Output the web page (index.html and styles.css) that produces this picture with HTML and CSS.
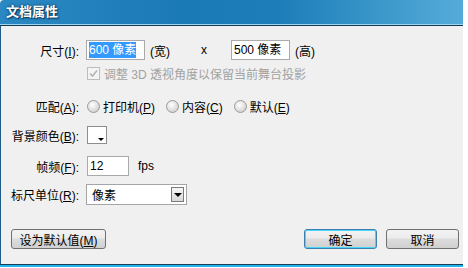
FILE: index.html
```html
<!DOCTYPE html>
<html lang="zh-CN">
<head>
    <meta charset="UTF-8">
    <title>文档属性</title>
    <link rel="stylesheet" href="styles.css">
</head>
<body>
    <div class="window">
        <div class="titlebar">文档属性</div>
        <div class="content">
            <div class="row row-size">
                <span class="label">尺寸(<u>I</u>):</span>
                <span class="input w-size"><span class="sel">600 像素</span></span>
                <span class="unit">(宽)</span>
                <span class="times">x</span>
                <span class="input w-size">500 像素</span>
                <span class="unit">(高)</span>
            </div>
            <div class="row row-check">
                <span class="label"></span>
                <span class="check">
                    <svg width="9" height="9" viewBox="0 0 9 9"><path d="M1 4.5 L3.5 7 L8 1.5" fill="none" stroke="#b4b4b4" stroke-width="1.6"/></svg>
                </span>
                <span class="disabled">调整 3D 透视角度以保留当前舞台投影</span>
            </div>
            <div class="row row-match">
                <span class="label">匹配(<u>A</u>):</span>
                <span class="radio"></span><span class="opt">打印机(<u>P</u>)</span>
                <span class="radio"></span><span class="opt">内容(<u>C</u>)</span>
                <span class="radio"></span><span class="opt">默认(<u>E</u>)</span>
            </div>
            <div class="row row-bg">
                <span class="label">背景颜色(<u>B</u>):</span>
                <span class="swatch"><span class="swatch-arrow"></span></span>
            </div>
            <div class="row row-fps">
                <span class="label">帧频(<u>F</u>):</span>
                <span class="input w-fps">12</span>
                <span class="fps">fps</span>
            </div>
            <div class="row row-ruler">
                <span class="label">标尺单位(<u>R</u>):</span>
                <span class="select">像素<span class="select-btn"></span></span>
            </div>
            <div class="buttons">
                <button class="btn btn-default">设为默认值(<u>M</u>)</button>
                <span class="spacer"></span>
                <button class="btn btn-ok">确定</button>
                <button class="btn">取消</button>
            </div>
        </div>
    </div>
</body>
</html>
```

FILE: styles.css
```css
body {
    margin: 0;
    width: 468px;
    height: 268px;
    background: #ffffff;
    font-family: "Liberation Sans", "Noto Sans CJK SC", sans-serif;
    font-size: 12px;
    color: #000;
}
.window {
    width: 463px;
    height: 265px;
    display: flex;
    flex-direction: column;
    border-bottom: 2px solid #22b4ea;
}
.titlebar {
    height: 24px;
    line-height: 23px;
    padding-left: 6px;
    color: #fff;
    font-weight: bold;
    font-size: 13px;
    text-shadow: 0 0 3px #0c3b5c, 1px 1px 1px #0c3b5c;
    background: linear-gradient(to right, #2b88c2, #1a7ab6 40%, #1c7db8 60%, #55acd9);
    border-bottom: 1px solid #9fd6ee;
    box-shadow: 0 1px 0 #123a55;
    border-top-left-radius: 4px;
}
.content {
    flex: 1;
    margin-top: 1px;
    background: #f0f0f0;
    border-left: 1px solid #1d5a86;
    border-bottom: 1px solid #163d58;
    padding: 14px 0 0 0;
    display: flex;
    flex-direction: column;
}
.row {
    display: flex;
    align-items: center;
}
.label {
    width: 78px;
    text-align: right;
    margin-right: 7px;
    white-space: nowrap;
    flex-shrink: 0;
}
.input {
    height: 18px;
    line-height: 18px;
    border: 1px solid #aaaaaa;
    background: #fff;
    padding-left: 2px;
    box-sizing: content-box;
}
.w-size {
    width: 55px;
}
.w-fps {
    width: 38px;
}
.sel {
    background: #3399ff;
    color: #fff;
    padding: 1px 0;
}
.unit {
    margin-left: 5px;
}
.times {
    margin-left: 31px;
    margin-right: 24px;
}
.row-check {
    margin-top: 6px;
    height: 14px;
}
.check {
    width: 11px;
    height: 11px;
    border: 1px solid #bdbdbd;
    background: #f4f4f4;
    display: flex;
    align-items: center;
    justify-content: center;
    margin-left: 1px;
    margin-right: 4px;
}
.disabled {
    color: #a2a2a2;
}
.row-match {
    margin-top: 18px;
    height: 16px;
}
.radio {
    width: 11px;
    height: 11px;
    border-radius: 50%;
    border: 1px solid #9a9a9a;
    background: radial-gradient(circle at 40% 35%, #ffffff, #dcdcdc 60%, #bdbdbd);
    margin-left: 1px;
    margin-right: 3px;
}
.opt {
    margin-right: 10px;
}
.row-bg {
    margin-top: 11px;
    height: 20px;
}
.swatch {
    width: 18px;
    height: 16px;
    border: 1px solid #8d8d8d;
    background: #fff;
    position: relative;
    margin-left: 1px;
}
.swatch-arrow {
    position: absolute;
    right: 2px;
    bottom: 2px;
    border-left: 3px solid transparent;
    border-right: 3px solid transparent;
    border-top: 3px solid #000;
}
.row-fps {
    margin-top: 11px;
    height: 20px;
}
.row-fps .input {
    margin-left: 1px;
}
.fps {
    margin-left: 9px;
}
.row-ruler {
    margin-top: 8px;
    height: 21px;
}
.select {
    width: 94px;
    height: 19px;
    border: 1px solid #a5a5a5;
    background: #fff;
    padding-left: 5px;
    display: flex;
    align-items: center;
    justify-content: space-between;
    box-sizing: content-box;
}
.select-btn {
    width: 11px;
    height: 13px;
    margin-right: 2px;
    border: 1px solid #7a7a7a;
    background: linear-gradient(#f6f6f6, #d8d8d8);
    display: flex;
    align-items: center;
    justify-content: center;
}
.select-btn::after {
    content: "";
    border-left: 4px solid transparent;
    border-right: 4px solid transparent;
    border-top: 4px solid #000;
}
.buttons {
    display: flex;
    align-items: center;
    margin-top: 24px;
    padding: 0 4px 0 10px;
}
.spacer {
    flex: 1;
}
.btn {
    height: 20px;
    width: 73px;
    border: 1px solid #707070;
    border-radius: 3px;
    background: linear-gradient(#f3f3f3 0%, #ebebeb 45%, #dddddd 50%, #d0d0d0 100%);
    font-family: inherit;
    font-size: 12px;
    padding: 0;
    color: #000;
}
.btn-default {
    width: 95px;
}
.btn-ok {
    border-color: #3c7fb1;
    box-shadow: inset 0 0 0 1px #48d5fb;
    margin-right: 9px;
}
```
